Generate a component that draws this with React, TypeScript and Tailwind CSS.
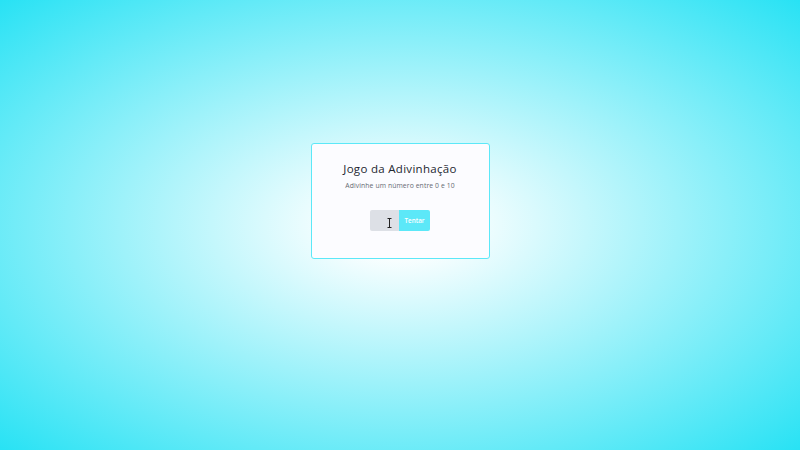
import React from "react";

export default function App() {
  return (
    <div
      className="w-[800px] h-[450px] flex items-center justify-center bg-[radial-gradient(ellipse_at_center,#ffffff_0%,#ffffff_8%,#28e2f4_100%)]"
      style={{ fontFamily: '"Open Sans", "Liberation Sans", sans-serif' }}
    >
      <div className="w-[179px] h-[116px] bg-[#fcfcff] border border-[#5ce8f8] rounded-[3px] flex flex-col items-center pt-[17px] mt-[-48px]">
        <div className="text-[11.5px] leading-[16px] text-[#23272f] tracking-[0.3px]">Jogo da Adivinhação</div>
        <div className="text-[6.8px] leading-[10px] text-[#666a73] mt-[4px] tracking-[0.1px]">Adivinhe um número entre 0 e 10</div>
        <div className="flex mt-[19px]">
          <div className="relative w-[29px] h-[21px] bg-[#dde0e6] rounded-l-[2px]">
            <svg className="absolute left-[17px] top-[8px]" width="5" height="10" viewBox="0 0 5 10">
              <path d="M0.5 0.5h4M2.5 0.5v9M0.5 9.5h4" stroke="#222" strokeWidth="1" fill="none" />
            </svg>
          </div>
          <div className="w-[31px] h-[21px] bg-[#5ce8f8] rounded-r-[2px] flex items-center justify-center text-white text-[6.3px] font-semibold">
            Tentar
          </div>
        </div>
      </div>
    </div>
  );
}
